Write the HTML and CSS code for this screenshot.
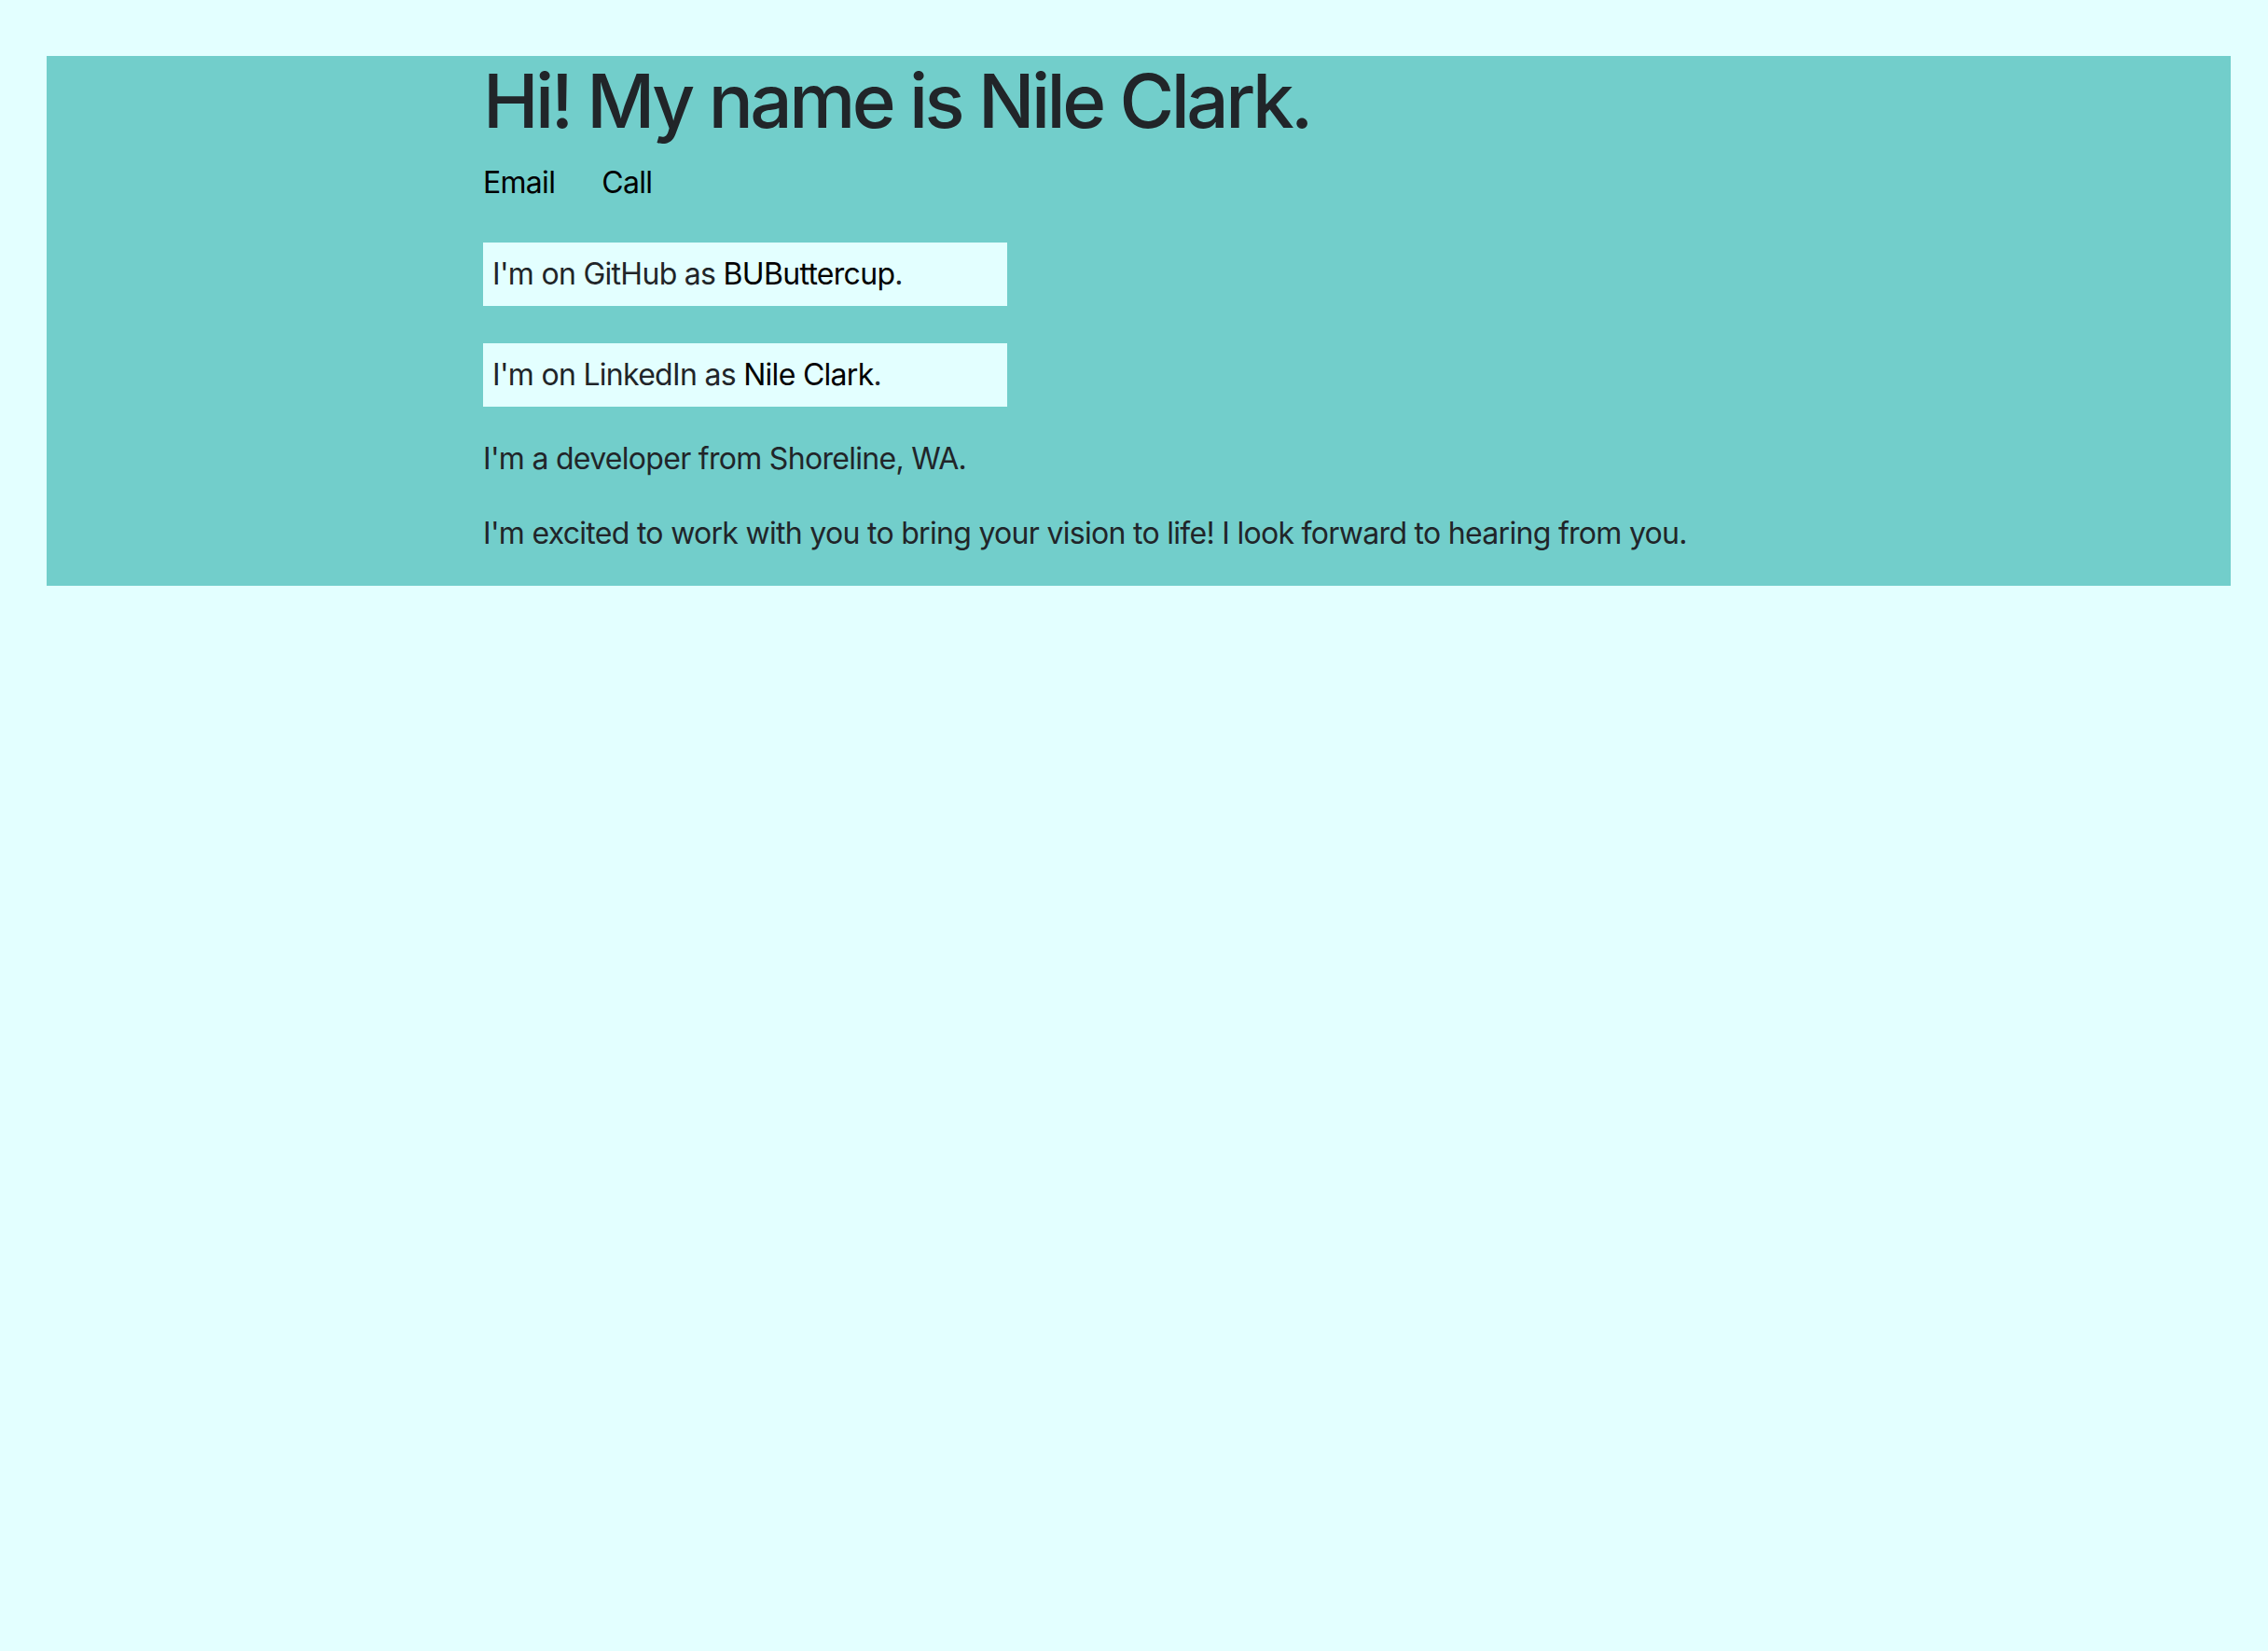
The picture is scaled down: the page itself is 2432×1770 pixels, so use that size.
FILE: index.html
```html
<!DOCTYPE html>
<html lang="en">
<head>
<meta charset="utf-8">
<title>Nile Clark</title>
<link rel="stylesheet" href="styles.css">
</head>
<body>
<div class="page">
  <header class="hero">
    <h1 class="title">Hi! My name is Nile Clark.</h1>
    <nav class="contact">
      <a class="contact-link email" href="#">Email</a>
      <a class="contact-link" href="#">Call</a>
    </nav>
    <p class="profile profile-first">I'm on GitHub as <a class="profile-link" href="#">BUButtercup</a>.</p>
    <p class="profile">I'm on LinkedIn as <a class="profile-link" href="#">Nile Clark</a>.</p>
    <p class="text">I'm a developer from Shoreline, WA.</p>
    <p class="text">I'm excited to work with you to bring your vision to life! I look forward to hearing from you.</p>
  </header>
</div>
</body>
</html>
```

FILE: styles.css
```css
html, body {
  margin: 0;
  padding: 0;
  background: #e3ffff;
}
body {
  font-family: Inter, "Noto Sans", "Liberation Sans", sans-serif;
  font-size: 32px;
  line-height: 48px;
  letter-spacing: -0.022em;
  color: #212529;
}
.page {
  padding: 60px 40px 0 50px;
}
.hero {
  background: #72cecb;
  padding-left: 468px;
  display: flow-root;
}
.title {
  margin: 0 0 16px;
  font-size: 80px;
  line-height: 96px;
  font-weight: 500;
  letter-spacing: -0.044em;
  color: #212529;
}
.contact {
  display: flex;
  gap: 50px;
  margin-bottom: 40px;
}
.contact-link {
  color: #000;
  text-decoration: none;
}
.profile {
  width: 562px;
  box-sizing: border-box;
  padding: 10px;
  margin: 0 0 40px;
  background: #e3ffff;
}
.profile + .profile {
  margin-bottom: 32px;
}
.profile-link {
  color: #000;
  text-decoration: none;
}
.text {
  margin: 0 0 32px;
}
```
